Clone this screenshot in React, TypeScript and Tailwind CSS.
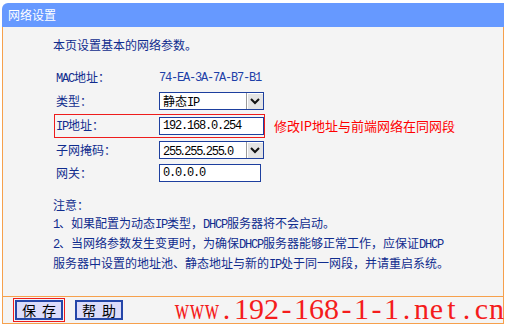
import React from 'react';

const CJK = "font-['Noto_Sans_CJK_SC',sans-serif]";
const MONO = "font-['Liberation_Mono','Noto_Sans_CJK_SC',monospace]";

// ASCII runs get the narrow mono face so they take half a CJK cell, as in the old router UI
function mix(text: string) {
  return text.split(/([A-Za-z0-9]+)/).map((part, i) =>
    /^[A-Za-z0-9]+$/.test(part) ? (
      <span key={i} className={`${MONO} text-[12px] tracking-[-1.2px]`}>{part}</span>
    ) : (
      <React.Fragment key={i}>{part}</React.Fragment>
    )
  );
}

function Chevron() {
  return (
    <svg width="12" height="10" viewBox="0 0 12 10">
      <polyline points="2,3 6,7 10,3" fill="none" stroke="#111" strokeWidth="2" />
    </svg>
  );
}

function SelectBox({ value, width }: { value: string; width: string }) {
  return (
    <div className={`${width} h-[18px] flex border border-[#1d3f9e] bg-white`}>
      <div className="flex-1 pl-[3px] text-[12px] leading-[16px] text-black overflow-hidden whitespace-nowrap">
        {mix(value)}
      </div>
      <div className="w-[17px] h-full flex items-center justify-center bg-[#e4e4e4] border-l border-[#9a9a9a] shadow-[inset_1px_1px_0_#fff]">
        <Chevron />
      </div>
    </div>
  );
}

function InputBox({ value, width }: { value: string; width: string }) {
  return (
    <div className={`${width} h-[18px] border border-[#1d3f9e] bg-white pl-[3px] text-[12px] leading-[16px] text-black ${MONO} tracking-[-1.2px]`}>
      {value}
    </div>
  );
}

function Row({ label, children, boxed }: { label: string; children: React.ReactNode; boxed?: boolean }) {
  return (
    <div className={`ml-[51px] w-[211px] flex items-center border ${boxed ? 'border-[#ee1c1c] h-[24px]' : 'border-transparent h-[18px]'}`}>
      <div className="w-[104px] pl-[1px] text-[12px] text-[#102c8e] whitespace-nowrap">{mix(label)}</div>
      {children}
    </div>
  );
}

function FootButton({ a, b }: { a: string; b: string }) {
  return (
    <button className="w-[48px] h-[20px] flex items-center justify-center bg-[#dcdcfa] border-2 border-[#2546a8] text-[14px] leading-[14px] text-black">
      <span className="mr-[6px]">{a}</span>
      <span>{b}</span>
    </button>
  );
}

const WATERMARK = 'www.192-168-1-1.net.cn';

export default function App() {
  return (
    <div className={`relative w-[506px] h-[327px] bg-white ${CJK} overflow-hidden`}>
      <div className="ml-[2px] mt-[3px] w-[502px] flex flex-col">
        <div className="h-[24px] bg-[#6699ff] rounded-tl-[6px] pl-[6px] flex items-center text-[12px] text-white">
          网络设置
        </div>

        <div className="h-[269px] bg-[#f4f4f4] border-x border-[#f6a04c] flex flex-col">
          <div className="pl-[50px] pt-[10px] h-[26px] text-[12px] leading-[16px] text-[#102c8e]">
            本页设置基本的网络参数。
          </div>

          <div className="mt-[16px] flex flex-col">
            <Row label="MAC地址：">
              <span className={`text-[12px] text-[#1d3fa8] ${MONO} tracking-[-1.2px]`}>74-EA-3A-7A-B7-B1</span>
            </Row>
            <div className="mt-[5px]">
              <Row label="类型：">
                <SelectBox value="静态IP" width="w-[105px]" />
              </Row>
            </div>
            <div className="mt-[4px] flex items-center">
              <Row label="IP地址：" boxed>
                <InputBox value="192.168.0.254" width="w-[105px]" />
              </Row>
              <span className="ml-[9px] text-[13px] text-[#ff0000] whitespace-nowrap">修改IP地址与前端网络在同网段</span>
            </div>
            <div className="mt-[3px]">
              <Row label="子网掩码：">
                <SelectBox value="255.255.255.0" width="w-[105px]" />
              </Row>
            </div>
            <div className="mt-[5px]">
              <Row label="网关：">
                <InputBox value="0.0.0.0" width="w-[102px]" />
              </Row>
            </div>
          </div>

          <div className="mt-[14px] pl-[50px] text-[12px] leading-[18px] text-[#102c8e] whitespace-nowrap">
            <div>注意：</div>
            <div>{mix('1、如果配置为动态IP类型，DHCP服务器将不会启动。')}</div>
            <div>{mix('2、当网络参数发生变更时，为确保DHCP服务器能够正常工作，应保证DHCP')}</div>
            <div>{mix('服务器中设置的地址池、静态地址与新的IP处于同一网段，并请重启系统。')}</div>
          </div>
        </div>

        <div className="h-[28px] bg-[#f4f4f4] border border-[#f6a04c] flex items-center pl-[10px]">
          <div className="p-[1px] border border-[#ee1c1c]">
            <FootButton a="保" b="存" />
          </div>
          <div className="ml-[10px]">
            <FootButton a="帮" b="助" />
          </div>
        </div>
      </div>

      <div className="absolute left-[174px] top-[294px] h-[30px] flex font-['Liberation_Serif',serif] text-[30px] leading-[30px] text-[#f41c1c]">
        {WATERMARK.split('').map((c, i) => (
          <span key={i} className="w-[15px] flex justify-center">
            <span className={c === 'w' ? 'inline-block scale-x-[0.66]' : 'inline-block'}>{c}</span>
          </span>
        ))}
      </div>
    </div>
  );
}
